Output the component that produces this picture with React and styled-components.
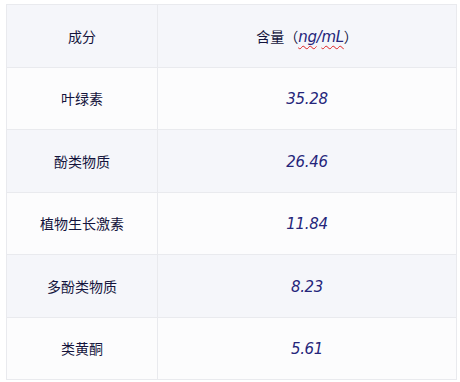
import styled, { createGlobalStyle } from "styled-components";

const rows = [
  { name: "叶绿素", value: "35.28" },
  { name: "酚类物质", value: "26.46" },
  { name: "植物生长激素", value: "11.84" },
  { name: "多酚类物质", value: "8.23" },
  { name: "类黄酮", value: "5.61" },
];

const App = () => {
  return (
    <>
      <GlobalStyle />
      <Page>
        <Table>
          <thead>
            <Row $shade>
              <NameCell as="th">成分</NameCell>
              <ValueCell as="th">
                <Cjk>含量（</Cjk>
                <Spell>ng</Spell>
                <Hand>/</Hand>
                <Spell>mL</Spell>
                <Cjk>）</Cjk>
              </ValueCell>
            </Row>
          </thead>
          <tbody>
            {rows.map((row, i) => (
              <Row key={row.name} $shade={i % 2 === 1}>
                <NameCell>{row.name}</NameCell>
                <ValueCell>
                  <Hand>{row.value}</Hand>
                </ValueCell>
              </Row>
            ))}
          </tbody>
        </Table>
      </Page>
    </>
  );
};

const GlobalStyle = createGlobalStyle`
  body {
    margin: 0;
    background: #ffffff;
    font-family: "Noto Sans CJK SC", "DejaVu Sans", sans-serif;
  }
`;

const Page = styled.div`
  padding: 4px 0 0 6px;
`;

const Table = styled.table`
  border-collapse: collapse;
  width: 451px;
  table-layout: fixed;
  border: 1px solid #e9eaee;
`;

const Row = styled.tr`
  height: 62.5px;
  background: ${(p) => (p.$shade ? "#f5f6fa" : "#fcfcfd")};
`;

const Cell = styled.td`
  border: 1px solid #e9eaee;
  text-align: center;
  vertical-align: middle;
  padding: 0;
  font-weight: normal;
  font-size: 14px;
  color: #14143c;
`;

const NameCell = styled(Cell)`
  width: 150px;
`;

const ValueCell = styled(Cell)``;

const Cjk = styled.span`
  font-family: "Noto Sans CJK SC", sans-serif;
`;

const Hand = styled.span`
  font-family: "DejaVu Sans", sans-serif;
  font-size: 15px;
  font-style: italic;
  color: #25257a;
  letter-spacing: -0.3px;
`;

const Spell = styled(Hand)`
  text-decoration: underline wavy #e02020;
  text-decoration-thickness: 1px;
  text-underline-offset: 3px;
`;

export default App;
